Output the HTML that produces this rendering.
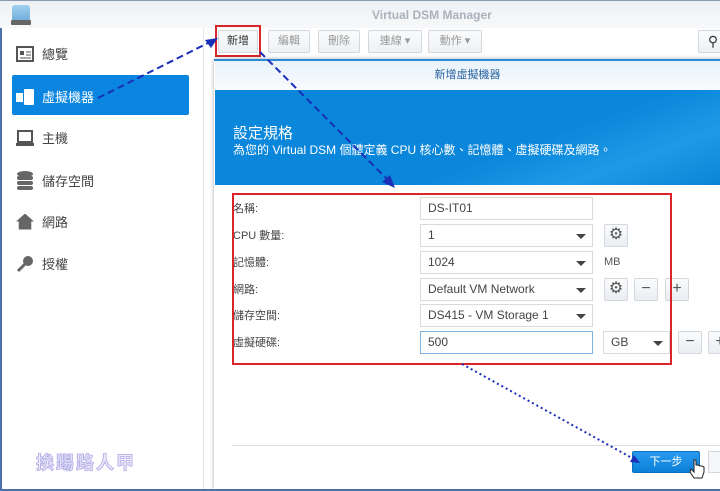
<!DOCTYPE html>
<html><head><meta charset="utf-8"><style>
*{box-sizing:border-box;margin:0;padding:0}
body{width:720px;height:491px;overflow:hidden;font-family:"Liberation Sans","Noto Sans CJK TC",sans-serif;background:#fff;position:relative;font-size:12px;color:#333}
.abs{position:absolute}
.title{left:0;top:0;width:720px;height:28px;background:linear-gradient(#eef1f4,#f7f8fa);border-top:1px solid #8a9bb0}
.side{left:0;top:28px;width:204px;height:463px;background:#fff;border-right:1px solid #e2e5e9;border-left:2px solid #4a72a8}
.mi{position:absolute;left:16px;font-size:13px;color:#444;display:flex;align-items:center;gap:8px}
.btn{position:absolute;top:30px;height:23px;border:1px solid #d3d8de;border-radius:2px;background:linear-gradient(#fafbfc,#eef1f4);font-size:11px;color:#999;text-align:center;line-height:21px}
.inp{position:absolute;left:420px;width:173px;height:23px;border:1px solid #d6dbe0;background:#fff;font-size:12px;color:#444;padding-left:7px;line-height:21px}
.arr::after{content:"";position:absolute;right:6px;top:9px;border:5px solid transparent;border-top:5px solid #444;border-bottom:0}
.lbl{position:absolute;left:233px;font-size:11px;color:#444}
.sb{position:absolute;width:24px;height:23px;border:1px solid #d3d8de;border-radius:2px;background:linear-gradient(#fafbfc,#eaeef2);text-align:center;line-height:20px;font-size:16px;color:#555}
</style></head><body>
<div class="abs title"></div>
<div class="abs" style="left:12px;top:5px;width:18px;height:18px;border-radius:3px;background:linear-gradient(#9fd0f0,#6aa9d8)"></div>
<div class="abs" style="left:11px;top:20px;width:20px;height:5px;background:#666;border-radius:1px"></div>
<div class="abs" style="left:372px;top:8px;font-size:12px;font-weight:bold;color:#aab2bb">Virtual DSM Manager</div>
<div class="abs side"></div>
<div class="mi" style="top:44px"><svg width="18" height="16"><rect x="1" y="1" width="16" height="14" fill="none" stroke="#555" stroke-width="2"/><rect x="4" y="5" width="4" height="4" fill="#555"/><line x1="10" y1="6" x2="15" y2="6" stroke="#555"/><line x1="10" y1="9" x2="15" y2="9" stroke="#555"/><line x1="4" y1="12" x2="15" y2="12" stroke="#555"/></svg>總覽</div>
<div class="abs" style="left:12px;top:75px;width:177px;height:40px;background:#0b86e0;border-radius:2px"></div>
<div class="mi" style="top:87px;color:#fff"><svg width="18" height="16"><rect x="0" y="4" width="7" height="9" fill="#fff"/><rect x="8" y="0" width="10" height="16" rx="1" fill="#fff"/></svg>虛擬機器</div>
<div class="mi" style="top:128px"><svg width="18" height="16"><rect x="2" y="1" width="14" height="11" fill="none" stroke="#555" stroke-width="2"/><rect x="0" y="13" width="18" height="3" fill="#555"/></svg>主機</div>
<div class="mi" style="top:170px"><svg width="18" height="20"><ellipse cx="9" cy="4" rx="8" ry="3" fill="#666"/><rect x="1" y="6" width="16" height="4" rx="2" fill="#666"/><rect x="1" y="11" width="16" height="4" rx="2" fill="#666"/><rect x="1" y="16" width="16" height="4" rx="2" fill="#666"/></svg>儲存空間</div>
<div class="mi" style="top:212px"><span style="width:18px;height:16px;background:#666;clip-path:polygon(50% 0,100% 50%,85% 50%,85% 100%,15% 100%,15% 50%,0 50%);display:inline-block"></span>網路</div>
<div class="mi" style="top:254px"><svg width="18" height="18"><circle cx="12" cy="6" r="5" fill="#666"/><line x1="9" y1="9" x2="2" y2="16" stroke="#666" stroke-width="3"/></svg>授權</div>
<div class="btn" style="left:218px;width:40px;color:#333">新增</div>
<div class="btn" style="left:268px;width:42px">編輯</div>
<div class="btn" style="left:318px;width:42px">刪除</div>
<div class="btn" style="left:368px;width:54px">連線 ▾</div>
<div class="btn" style="left:428px;width:54px">動作 ▾</div>
<div class="btn" style="left:698px;width:30px;color:#333;font-size:14px">⚲</div>
<div class="abs" style="left:215px;top:25px;width:46px;height:32px;border:2px solid #d9262c"></div>
<div class="abs" style="left:214px;top:59px;width:510px;height:430px;background:#fff;border-top:2px solid #2c8ad6;box-shadow:0 0 4px rgba(0,0,0,.35)"></div>
<div class="abs" style="left:215px;top:61px;width:505px;height:29px;background:linear-gradient(#e8f2fb,#f9fbfd);text-align:center;font-size:11px;color:#2a62a0;line-height:29px">新增虛擬機器</div>
<div class="abs" style="left:215px;top:90px;width:505px;height:95px;background:linear-gradient(160deg,#0a86db 60%,#1d9ae6 80%,#0b84d6)"></div>
<div class="abs" style="left:233px;top:122px;font-size:15px;color:#fff">設定規格</div>
<div class="abs" style="left:233px;top:141px;font-size:12px;color:#fff">為您的 Virtual DSM 個體定義 CPU 核心數、記憶體、虛擬硬碟及網路。</div>
<div class="lbl" style="top:200px">名稱:</div>
<div class="lbl" style="top:227px">CPU 數量:</div>
<div class="lbl" style="top:254px">記憶體:</div>
<div class="lbl" style="top:281px">網路:</div>
<div class="lbl" style="top:307px">儲存空間:</div>
<div class="lbl" style="top:334px">虛擬硬碟:</div>
<div class="inp" style="top:197px">DS-IT01</div>
<div class="inp arr" style="top:224px">1</div>
<div class="inp arr" style="top:251px">1024</div>
<div class="inp arr" style="top:278px">Default VM Network</div>
<div class="inp arr" style="top:304px">DS415 - VM Storage 1</div>
<div class="inp" style="top:331px;border-color:#7fb2de">500</div>
<div class="sb" style="left:604px;top:224px">⚙</div>
<div class="abs" style="left:604px;top:256px;font-size:11px;color:#555">MB</div>
<div class="sb" style="left:604px;top:278px">⚙</div>
<div class="sb" style="left:634px;top:278px">−</div>
<div class="sb" style="left:665px;top:278px">+</div>
<div class="inp arr" style="left:603px;top:331px;width:67px">GB</div>
<div class="sb" style="left:678px;top:331px">−</div>
<div class="sb" style="left:708px;top:331px">+</div>
<div class="abs" style="left:232px;top:193px;width:440px;height:172px;border:2px solid #d9262c"></div>
<div class="abs" style="left:232px;top:445px;width:488px;height:1px;background:#ddd"></div>
<div class="abs" style="left:632px;top:451px;width:68px;height:22px;background:linear-gradient(#2a9af0,#0b7fd8);border:1px solid #0a6fc0;border-radius:2px;color:#fff;font-size:11px;text-align:center;line-height:20px">下一步</div>
<div class="abs" style="left:708px;top:451px;width:20px;height:22px;border:1px solid #d3d8de;background:#f5f6f8"></div>
<div class="abs" style="left:36px;top:449px;font-size:18px;font-weight:bold;color:#eeedfb;-webkit-text-stroke:1px #b9b3e8;letter-spacing:2px">挨踢路人甲</div>
<div class="abs" style="left:0;top:489px;width:720px;height:2px;background:#4a72a8"></div>
<svg class="abs" style="left:0;top:0" width="720" height="491">
<g stroke="#1a2fb8" stroke-width="2" fill="none" stroke-dasharray="7,4">
<line x1="98" y1="98" x2="210" y2="42"/>
<line x1="260" y1="52" x2="390" y2="182"/>
</g>
<line x1="462" y1="364" x2="632" y2="458" stroke="#1a2fb8" stroke-width="2" stroke-dasharray="2,3"/>
<polygon points="218,38 205,40 211,48" fill="#1a2fb8"/>
<polygon points="395,188 382,182 390,175" fill="#1a2fb8"/>
<polygon points="640,463 630,462 634,455" fill="#1a2fb8"/>
<path d="M694 460 v12 l-3 -3 l-1 3 l4 6 h8 l2 -6 v-5 l-2 -1 l-2 0 l-2 -1 l-2 0 v-5 z" fill="#fff" stroke="#222" stroke-width="1"/>
</svg>
</body></html>
